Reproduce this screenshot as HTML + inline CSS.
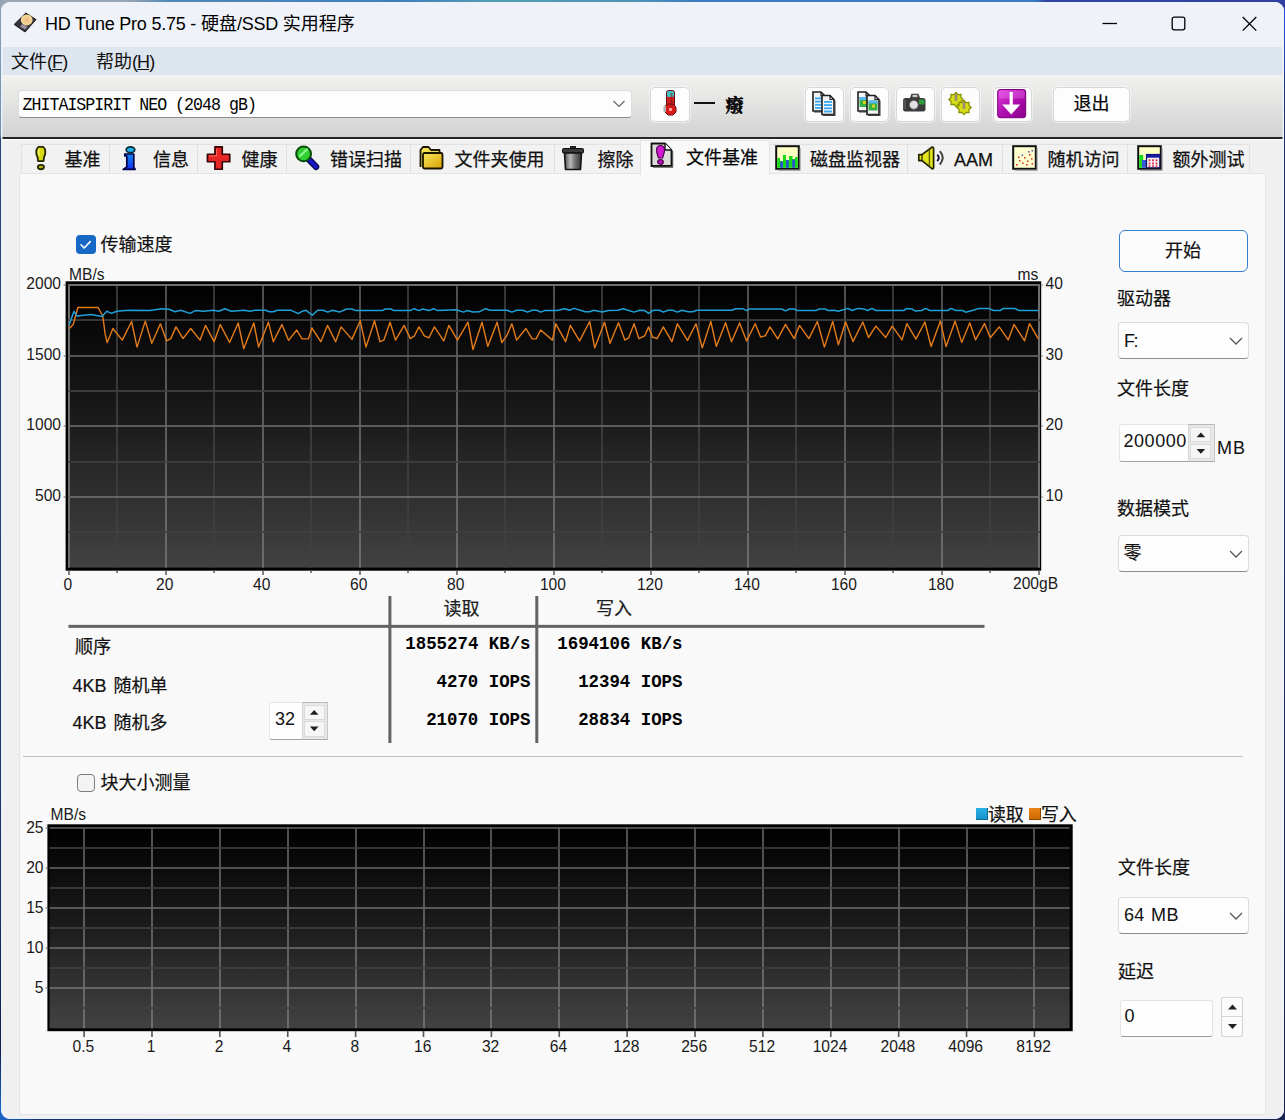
<!DOCTYPE html>
<html lang="zh-CN">
<head>
<meta charset="utf-8">
<title>HD Tune Pro 5.75 - 硬盘/SSD 实用程序</title>
<style>
*{box-sizing:border-box;margin:0;padding:0}
html,body{width:1285px;height:1120px;overflow:hidden}
body{position:relative;background:#1b2450;font-family:"Liberation Sans","Noto Sans CJK SC",sans-serif;color:#000}
.a{position:absolute;white-space:nowrap}
.t18{font-size:18px;line-height:22px;-webkit-text-stroke:0.2px #111}
.ax{font-size:15.6px;line-height:18px;color:#1a1a1a}
.axr{text-align:right}
.axc{text-align:center}

.tabt{position:absolute;top:148.8px;font-size:18px;line-height:22px;white-space:nowrap;color:#111;-webkit-text-stroke:0.25px #111}
.tbtn{position:absolute;top:87px;height:35px;width:39px;background:#fdfdfd;border:1px solid #d6d6d6;border-radius:5px;box-shadow:0 0 0 1px rgba(255,255,255,.5)}
.combo{position:absolute;background:#fdfdfd;border:1px solid #dcdcdc;border-bottom-color:#8c8c8c;border-radius:4px}
.mono{font-family:"Liberation Mono","Noto Sans CJK SC",monospace}
.val{position:absolute;font-family:"Liberation Mono","Noto Sans CJK SC",monospace;font-weight:bold;font-size:17.4px;line-height:20px;white-space:pre;text-align:right;color:#000;transform:scaleY(1.1);transform-origin:50% 80%}
svg{position:absolute;overflow:visible}
</style>
</head>
<body>
<div class="a" style="left:0;top:0;width:1285px;height:14px;background:linear-gradient(90deg,#9aa6b4 0,#97a4b3 130px,#4f88b8 170px,#3f7fba 400px,#52a0b4 500px,#4a93b6 640px,#3a7cc0 700px,#3a7cc0 1035px,#3346a8 1045px,#2f40a0 1285px)"></div>
<div class="a" style="left:0;top:10px;width:6px;height:1110px;background:linear-gradient(180deg,#8c9db4 0,#6f8fa8 125px,#2c4272 130px,#2a4070 500px,#1f2c5c 900px,#171d48 1040px,#1a64c8 1100px)"></div>
<div class="a" style="left:1279px;top:10px;width:6px;height:1110px;background:linear-gradient(180deg,#2250d8 0,#1f2e78 110px,#1f2e78 500px,#161c48 1110px)"></div>
<div class="a" style="left:0;top:1110px;width:1285px;height:10px;background:linear-gradient(90deg,#1a64c8 0,#18306c 40px,#1b2450 200px,#1b2450 1285px)"></div>
<div class="a" style="left:1px;top:1.6px;width:1283px;height:1117.4px;border-radius:9px;background:#f0f0f0;overflow:hidden">
<div class="a" style="left:0;top:0;width:1283px;height:45.4px;background:#eff3f9"></div>
<div class="a" style="left:0;top:45.4px;width:1283px;height:28px;background:#dde5ee"></div>
<div class="a" style="left:0;top:73.4px;width:1283px;height:62px;background:linear-gradient(180deg,#f1f1f0 0,#d2d2d2 62px)"></div>
<div class="a" style="left:0;top:135.2px;width:1283px;height:2px;background:#262626"></div>
<div class="a" style="left:0;top:137.2px;width:1283px;height:3px;background:linear-gradient(180deg,#fbfbfb,#f0f0f0)"></div>
<div class="a" style="left:0;top:0;width:1283px;height:1117.4px;border-radius:9px;box-shadow:inset 1.5px 0 0 #e6f3fd, inset -1.5px 0 0 #eef4fb, inset 0 -2px 0 #e9f1fa"></div>
</div>
<svg style="left:12px;top:11px" width="26" height="24" viewBox="0 0 26 24"><defs><radialGradient id="pl" cx=".5" cy=".5" r=".5"><stop offset="0" stop-color="#e6ad84"/><stop offset=".45" stop-color="#f4cf8e"/><stop offset="1" stop-color="#f1d592"/></radialGradient><linearGradient id="hb" x1="0" y1="0" x2="1" y2="1"><stop offset="0" stop-color="#2a2a26"/><stop offset=".6" stop-color="#3c3648"/><stop offset="1" stop-color="#20201c"/></linearGradient></defs><path d="M13.8 2 L24 8.6 L13 21 L2.2 13.4 Z" fill="url(#hb)" stroke="#1c1c1a" stroke-width="1" stroke-linejoin="round"/><path d="M8 15.5 L13 18.6 L15.5 15.8 L10.5 13 Z" fill="#b8a8c0" opacity=".8"/><ellipse cx="14.7" cy="8.9" rx="5.9" ry="5.5" fill="url(#pl)"/></svg>
<div class="a" style="left:45px;top:13px;font-size:18px;line-height:22px;color:#000"><span style="letter-spacing:-0.22px">HD Tune Pro 5.75 - </span>硬盘<span style="letter-spacing:-0.22px">/SSD </span>实用程序</div>
<svg style="left:1100px;top:14px" width="160" height="20" viewBox="0 0 160 20" fill="none" stroke="#000" stroke-width="1.3"><path d="M2.5 9.5 H17"/><rect x="72.2" y="3.2" width="12.6" height="12.6" rx="2"/><path d="M142.7 3 L156.3 16.6 M156.3 3 L142.7 16.6"/></svg>
<div class="a" style="left:11px;top:50.5px;font-size:18px;line-height:22px;color:#111">文件<span style="letter-spacing:-0.9px">(<u>F</u>)</span></div>
<div class="a" style="left:96px;top:50.5px;font-size:18px;line-height:22px;color:#111">帮助<span style="letter-spacing:-0.9px">(<u>H</u>)</span></div>
<div class="combo" style="left:18px;top:90px;width:614px;height:28px"></div>
<div class="a mono" style="left:22.5px;top:95.6px;font-size:16.6px;line-height:20px;letter-spacing:-0.98px;color:#000;transform:scaleY(1.09);transform-origin:0 80%">ZHITAISPIRIT NEO (2048 gB)</div>
<svg style="left:612px;top:100px" width="14" height="8" viewBox="0 0 14 8" fill="none" stroke="#666" stroke-width="1.2"><path d="M1.5 1 L7 6.5 L12.5 1"/></svg>
<div class="tbtn" style="left:649.5px;top:86.5px;height:35.5px;width:40px"></div>
<svg style="left:662px;top:89px" width="16" height="28" viewBox="0 0 16 28"><rect x="4.5" y="1.5" width="8" height="20" rx="2" fill="#d42222" stroke="#601010" stroke-width="1"/><rect x="5" y="2" width="7" height="6" rx="1.5" fill="#3fc4c4"/><path d="M3 17 L6 15 H11 L14 18 V23 L11 26 H6 L3 23 Z" fill="#d81c1c" stroke="#701010" stroke-width="1"/><rect x="1.5" y="17" width="2.5" height="6" fill="#b0b0b0"/><rect x="7" y="19" width="3" height="3" fill="#ff9a9a"/><rect x="8.5" y="4" width="2" height="14" fill="#7a1414" opacity=".55"/></svg>
<div class="a" style="left:694px;top:102.2px;width:21px;height:1.7px;background:#111"></div>
<div class="a" style="left:725.5px;top:92.5px;font-size:18px;line-height:22px;font-weight:bold;color:#000;font-family:'Noto Serif CJK SC','Noto Sans CJK SC',serif;-webkit-text-stroke:0.5px #000">癈</div>
<div class="tbtn" style="left:804.5px"></div>
<div class="tbtn" style="left:850px"></div>
<div class="tbtn" style="left:895.5px"></div>
<div class="tbtn" style="left:940.5px"></div>
<div class="tbtn" style="left:992.5px"></div>
<div class="tbtn" style="left:1053px;width:77px"></div>
<div class="a t18" style="left:1072px;top:93px;width:39px;text-align:center;color:#000">退出</div>
<svg style="left:811.5px;top:91px" width="26" height="26" viewBox="0 0 26 26"><path d="M1 1 H9 L13 5 V20 H1 Z" fill="#f4f4f6" stroke="#202020" stroke-width="1.6" stroke-linejoin="miter"/><path d="M9 1 V5 H13" fill="none" stroke="#202020" stroke-width="1.2"/><rect x="3" y="6.5" width="8" height="1.8" fill="#35a8f0"/><rect x="3" y="9.7" width="8" height="1.8" fill="#35a8f0"/><rect x="3" y="12.9" width="8" height="1.8" fill="#35a8f0"/><rect x="3" y="16.1" width="8" height="1.8" fill="#35a8f0"/><path d="M13.8 6 V20.8 H2" fill="none" stroke="#404040" stroke-width="1.4"/><path d="M10 4.5 H18 L22 8.5 V23.5 H10 Z" fill="#f4f4f6" stroke="#202020" stroke-width="1.6" stroke-linejoin="miter"/><path d="M18 4.5 V8.5 H22" fill="none" stroke="#202020" stroke-width="1.2"/><rect x="12" y="10.0" width="8" height="1.8" fill="#35a8f0"/><rect x="12" y="13.2" width="8" height="1.8" fill="#35a8f0"/><rect x="12" y="16.4" width="8" height="1.8" fill="#35a8f0"/><rect x="12" y="19.6" width="8" height="1.8" fill="#35a8f0"/><path d="M22.8 9.5 V24.3 H11" fill="none" stroke="#404040" stroke-width="1.4"/></svg>
<svg style="left:857px;top:91px" width="26" height="26" viewBox="0 0 26 26"><path d="M1 1 H9 L13 5 V20 H1 Z" fill="#f4f4f6" stroke="#202020" stroke-width="1.6" stroke-linejoin="miter"/><path d="M9 1 V5 H13" fill="none" stroke="#202020" stroke-width="1.2"/><rect x="2.5" y="6" width="9" height="10" fill="#38b048"/><rect x="2.5" y="6" width="9" height="3" fill="#58b8f0"/><rect x="6" y="10" width="3" height="3" fill="#d8d020"/><path d="M13.8 6 V20.8 H2" fill="none" stroke="#404040" stroke-width="1.4"/><path d="M10 4.5 H18 L22 8.5 V23.5 H10 Z" fill="#f4f4f6" stroke="#202020" stroke-width="1.6" stroke-linejoin="miter"/><path d="M18 4.5 V8.5 H22" fill="none" stroke="#202020" stroke-width="1.2"/><rect x="11.5" y="9.5" width="9" height="10" fill="#38b048"/><rect x="11.5" y="9.5" width="9" height="3" fill="#58b8f0"/><rect x="15" y="13.5" width="3" height="3" fill="#d8d020"/><path d="M22.8 9.5 V24.3 H11" fill="none" stroke="#404040" stroke-width="1.4"/></svg>
<svg style="left:901.5px;top:92px" width="26" height="22" viewBox="0 0 26 22"><path d="M8 6 L9.5 1.8 H16.5 L18 6 Z" fill="#3a3a3a"/><rect x="10.5" y="2.8" width="5" height="2.4" fill="#c8c8c8"/><rect x="1" y="6" width="22.5" height="13.5" rx="2.5" fill="#3a3a3a"/><rect x="1" y="8" width="3" height="9" fill="#555"/><rect x="17" y="7.5" width="5.5" height="5" rx="1" fill="#2e9a3a"/><circle cx="11.8" cy="12.8" r="4.4" fill="#e2e0e6"/><circle cx="11.8" cy="12.8" r="4.4" fill="none" stroke="#666" stroke-width=".8"/></svg>
<svg style="left:946px;top:90px" width="30" height="28" viewBox="0 0 30 28"><polygon points="17.2,9.5 14.9,11.5 15.1,14.6 12.0,14.4 10.0,16.7 8.0,14.4 4.9,14.6 5.1,11.5 2.8,9.5 5.1,7.5 4.9,4.4 8.0,4.6 10.0,2.3 12.0,4.6 15.1,4.4 14.9,7.5" fill="#d6dc18" stroke="#8a9000" stroke-width="1.2" stroke-linejoin="round"/><rect x="8.7" y="4.1" width="2.6" height="6.8" fill="#9a8a70"/><polygon points="25.2,17.5 22.9,19.5 23.1,22.6 20.0,22.4 18.0,24.7 16.0,22.4 12.9,22.6 13.1,19.5 10.8,17.5 13.1,15.5 12.9,12.4 16.0,12.6 18.0,10.3 20.0,12.6 23.1,12.4 22.9,15.5" fill="#d6dc18" stroke="#8a9000" stroke-width="1.2" stroke-linejoin="round"/><rect x="16.7" y="12.1" width="2.6" height="6.8" fill="#9a8a70"/></svg>
<svg style="left:997px;top:89px" width="30" height="30" viewBox="0 0 30 30"><defs><linearGradient id="mg" x1="0" y1="0" x2="1" y2="1"><stop offset="0" stop-color="#e040e0"/><stop offset=".5" stop-color="#b010b0"/><stop offset="1" stop-color="#8a008a"/></linearGradient></defs><rect x=".7" y=".5" width="28" height="28.2" rx="2.5" fill="url(#mg)" stroke="#7a007a" stroke-width="1"/><rect x="1.8" y="1.6" width="25.8" height="8" rx="2" fill="#f080f0" opacity=".35"/><path d="M14.2 3 V23" stroke="#fff" stroke-width="3.2"/><path d="M5.2 15.5 H23.2 L14.2 25.5 Z" fill="#fff"/></svg>
<div class="a" style="left:21px;top:143.5px;width:1229px;height:30.5px;background:#f2f2f2;border:1px solid #e2e2e2"></div>
<div class="tabt" style="left:64.5px">基准</div>
<div class="a" style="left:108.5px;top:145px;width:1px;height:28px;background:#e0e0e0"></div>
<div class="tabt" style="left:153px">信息</div>
<div class="a" style="left:196.5px;top:145px;width:1px;height:28px;background:#e0e0e0"></div>
<div class="tabt" style="left:241.5px">健康</div>
<div class="a" style="left:285.5px;top:145px;width:1px;height:28px;background:#e0e0e0"></div>
<div class="tabt" style="left:330px">错误扫描</div>
<div class="a" style="left:409.5px;top:145px;width:1px;height:28px;background:#e0e0e0"></div>
<div class="tabt" style="left:454.5px">文件夹使用</div>
<div class="a" style="left:553.5px;top:145px;width:1px;height:28px;background:#e0e0e0"></div>
<div class="tabt" style="left:597.5px">擦除</div>
<div class="a" style="left:768.5px;top:145px;width:1px;height:28px;background:#e0e0e0"></div>
<div class="tabt" style="left:810px">磁盘监视器</div>
<div class="a" style="left:907.0px;top:145px;width:1px;height:28px;background:#e0e0e0"></div>
<div class="tabt" style="left:954px">AAM</div>
<div class="a" style="left:1001.5px;top:145px;width:1px;height:28px;background:#e0e0e0"></div>
<div class="tabt" style="left:1047.5px">随机访问</div>
<div class="a" style="left:1127.0px;top:145px;width:1px;height:28px;background:#e0e0e0"></div>
<div class="tabt" style="left:1172.5px">额外测试</div>
<div class="a" style="left:19px;top:173px;width:1247px;height:942px;background:#f9f9f9;border:1px solid #e5e5e5"></div>
<div class="a" style="left:640px;top:140px;width:130px;height:35px;background:#f9f9f9;border:1px solid #e2e2e2;border-bottom:none"></div>
<div class="tabt" style="left:686px;top:146.5px;color:#000">文件基准</div>
<svg style="left:34px;top:145px" width="14" height="27" viewBox="0 0 14 27"><path d="M4.4 1.9 H9.2 Q11.4 3.6 11.4 7 Q11.4 10 10.2 11.6 L9.5 16.1 H4.1 L3.4 11.6 Q2.2 10 2.2 7 Q2.2 3.6 4.4 1.9 Z" fill="#d6d810" stroke="#262600" stroke-width="1.8" stroke-linejoin="round"/><path d="M5 4 Q4.2 7 5.2 11" stroke="#f0f060" stroke-width="1.6" fill="none"/><ellipse cx="6.9" cy="22.05" rx="3.1" ry="2.2" fill="#b8bc10" stroke="#262600" stroke-width="1.8"/></svg>
<svg style="left:122px;top:145px" width="16" height="27" viewBox="0 0 16 27"><defs><linearGradient id="ig" x1="0" y1="0" x2="0" y2="1"><stop offset="0" stop-color="#1488f4"/><stop offset="1" stop-color="#1030f0"/></linearGradient></defs><ellipse cx="8.45" cy="4.7" rx="4.3" ry="2.9" fill="#20b0f4" stroke="#062a30" stroke-width="1.7"/><path d="M2.8 9 H11.8 V22.2 L13.2 24.4 H1.2 L4.8 22 V11 H2.8 Z" fill="url(#ig)" stroke="#000048" stroke-width="1.7" stroke-linejoin="round"/></svg>
<svg style="left:206px;top:145px" width="26" height="27" viewBox="0 0 26 27"><path d="M8.95 1.85 H16.25 V9.25 H23.75 V16.75 H16.25 V24.25 H8.95 V16.75 H1.45 V9.25 H8.95 Z" fill="#e62626" stroke="#340404" stroke-width="1.7" stroke-linejoin="round"/><path d="M10.6 3.6 V10.8 H3.2" stroke="#ff6a5a" stroke-width="1.2" fill="none" opacity=".8"/></svg>
<svg style="left:294px;top:144px" width="28" height="28" viewBox="0 0 28 28"><path d="M14.5 15 L22 22.8" stroke="#080850" stroke-width="6.5" stroke-linecap="round"/><path d="M14.5 15 L22 22.8" stroke="#1818c8" stroke-width="3.8" stroke-linecap="round"/><circle cx="9.6" cy="9.9" r="7.4" fill="#30d030" stroke="#0a4a0a" stroke-width="2"/><path d="M6 12 L13 5.5" stroke="#90f890" stroke-width="2.2" stroke-linecap="round"/></svg>
<svg style="left:419px;top:145px" width="26" height="26" viewBox="0 0 26 26"><defs><linearGradient id="fg" x1="0" y1="0" x2="1" y2="1"><stop offset="0" stop-color="#f8e860"/><stop offset="1" stop-color="#d8a000"/></linearGradient></defs><path d="M1.5 22 V5 L4 2 H9.5 L12 5 H20.5 V8" fill="#f0e050" stroke="#181400" stroke-width="1.8" stroke-linejoin="round"/><rect x="4" y="8" width="19.5" height="15.5" rx="1.5" fill="url(#fg)" stroke="#181400" stroke-width="1.8"/></svg>
<svg style="left:561px;top:145px" width="24" height="26" viewBox="0 0 24 26"><defs><linearGradient id="tg" x1="0" y1="0" x2="1" y2="0"><stop offset="0" stop-color="#505050"/><stop offset=".35" stop-color="#b8b8b8"/><stop offset=".6" stop-color="#787878"/><stop offset="1" stop-color="#303030"/></linearGradient></defs><rect x="9" y="1" width="6" height="3" fill="#222"/><rect x="1.5" y="3.5" width="21" height="4.5" rx="1" fill="#3a3a3a" stroke="#111" stroke-width="1"/><path d="M3.5 8 H20.5 L19.5 24.5 H4.5 Z" fill="url(#tg)" stroke="#111" stroke-width="1.6" stroke-linejoin="round"/></svg>
<svg style="left:650px;top:142px" width="24" height="26" viewBox="0 0 24 26"><path d="M1.5 1.5 H15 L21.5 8 V24 H1.5 Z" fill="#dcdcd8" stroke="#101010" stroke-width="1.8" stroke-linejoin="miter"/><path d="M15 1.5 V8 H21.5" fill="#fff" stroke="#101010" stroke-width="1.4"/><path d="M22.6 9 V25.2 H3" stroke="#555" stroke-width="1.2" fill="none"/><path d="M10.5 3.5 C14 3.5 15 6.5 14.3 10 L12.6 16 H8.4 L6.7 10 C6 6.5 7 3.5 10.5 3.5 Z" fill="#d418d4" stroke="#500050" stroke-width="1.2"/><ellipse cx="10.5" cy="20" rx="2.8" ry="2.3" fill="#c010c0" stroke="#500050" stroke-width="1.2"/></svg>
<svg style="left:775px;top:145px" width="26" height="26" viewBox="0 0 26 26"><rect x="1.2" y="1.2" width="22.6" height="22.6" fill="#ffffc4" stroke="#101010" stroke-width="2"/><path d="M2.2 22.8 V13 H5 V16 H8 V10 H11 V15 H14 V11 H17.5 V14 H20 V12 H22.8 V22.8 Z" fill="#18d818"/><rect x="5.2" y="16.5" width="2.8" height="6.3" fill="#2858d0"/><rect x="11" y="15" width="2.8" height="7.8" fill="#2858d0"/><rect x="17.2" y="14.5" width="2.8" height="8.3" fill="#2858d0"/><path d="M24.8 3 V24.8 H3" stroke="#666" stroke-width="1.2" fill="none"/></svg>
<svg style="left:917px;top:145px" width="30" height="27" viewBox="0 0 30 27"><path d="M1.8 9.6 H5 L15.2 2 Q16.6 2 16.6 3.4 V22.4 Q16.6 23.8 15.2 23.8 L5 15.6 H1.8 Z" fill="#e2e41c" stroke="#222200" stroke-width="1.7" stroke-linejoin="round"/><path d="M12.4 4.5 V21.5" stroke="#606000" stroke-width="1.4"/><path d="M5 9.8 V15.4" stroke="#222200" stroke-width="1.2"/><path d="M20.2 9.6 Q23.4 12.6 20.2 16.2" stroke="#141448" stroke-width="1.9" fill="none"/><path d="M22.8 6.2 Q28.6 12.6 22.8 19.6" stroke="#3a3a3a" stroke-width="1.9" fill="none"/></svg>
<svg style="left:1012px;top:145px" width="26" height="26" viewBox="0 0 26 26"><rect x="1.2" y="1.2" width="22.6" height="22.6" fill="#ffffd0" stroke="#101010" stroke-width="2"/><path d="M24.8 3 V24.8 H3" stroke="#666" stroke-width="1.2" fill="none"/><g fill="#e03030"><rect x="4" y="19" width="1.6" height="1.6"/><rect x="7" y="15" width="1.6" height="1.6"/><rect x="10" y="17.5" width="1.6" height="1.6"/><rect x="12" y="12" width="1.6" height="1.6"/><rect x="15" y="15.5" width="1.6" height="1.6"/><rect x="17" y="9" width="1.6" height="1.6"/><rect x="19" y="13" width="1.6" height="1.6"/><rect x="6" y="11.5" width="1.6" height="1.6"/><rect x="14" y="19" width="1.6" height="1.6"/><rect x="19.5" y="18" width="1.6" height="1.6"/></g><g fill="#6060c0"><rect x="16" y="6" width="1.6" height="1.6"/><rect x="19.5" y="5" width="1.6" height="1.6"/><rect x="9.5" y="9.5" width="1.6" height="1.6"/></g></svg>
<svg style="left:1137px;top:145px" width="26" height="26" viewBox="0 0 26 26"><rect x="1.2" y="1.2" width="22.6" height="22.6" fill="#ffffc4" stroke="#101010" stroke-width="2"/><path d="M24.8 3 V24.8 H3" stroke="#666" stroke-width="1.2" fill="none"/><rect x="2.2" y="10" width="4" height="12.8" fill="#18d818"/><rect x="5" y="15" width="4" height="7.8" fill="#3858d8"/><rect x="9.5" y="9.5" width="13.3" height="13.3" fill="#f4f4f4" stroke="#101060" stroke-width="1.2"/><rect x="9.5" y="9.5" width="13.3" height="3.2" fill="#1818a0"/><g fill="#e04060"><rect x="11.5" y="14.3" width="2" height="2"/><rect x="15" y="14.3" width="2" height="2"/><rect x="18.5" y="14.3" width="2" height="2"/><rect x="11.5" y="17.5" width="2" height="2"/><rect x="15" y="17.5" width="2" height="2"/><rect x="18.5" y="17.5" width="2" height="2"/><rect x="11.5" y="20.3" width="2" height="1.6"/><rect x="15" y="20.3" width="2" height="1.6"/><rect x="18.5" y="20.3" width="2" height="1.6"/></g></svg>
<div class="a" style="left:76px;top:234.7px;width:19.5px;height:19.5px;border-radius:4px;background:#1668c4"></div>
<svg style="left:76px;top:235px" width="19" height="19" viewBox="0 0 19 19" fill="none" stroke="#fff" stroke-width="1.6" stroke-linecap="round" stroke-linejoin="round"><path d="M5 9.8 L8.2 13 L14.2 6.6"/></svg>
<div class="a t18" style="left:100.5px;top:233.5px;color:#111">传输速度</div>
<svg style="left:0;top:0" width="1285" height="1120" viewBox="0 0 1285 1120"><defs><linearGradient id="cg" x1="0" y1="0" x2="0" y2="1"><stop offset="0" stop-color="#000"/><stop offset=".5" stop-color="#1c1c1c"/><stop offset=".62" stop-color="#262626"/><stop offset="1" stop-color="#424242"/></linearGradient><linearGradient id="mj" x1="0" y1="0" x2="0" y2="1"><stop offset="0" stop-color="#5a5a5a"/><stop offset="1" stop-color="#747474"/></linearGradient></defs><rect x="65.6" y="281.3" width="975.6" height="289.40000000000003" fill="#000"/><rect x="68.2" y="284" width="971.8" height="283.6" fill="url(#cg)"/><rect x="68.0" y="284" width="2" height="283.6" fill="#6e6e6e"/><rect x="68.25" y="570.6" width="1.5" height="4.4" fill="#5a5a5a"/><rect x="116.15" y="284" width="1.7" height="283.6" fill="#404040"/><rect x="116.25" y="570.6" width="1.5" height="2.4" fill="#5a5a5a"/><rect x="165.15" y="284" width="1.7" height="283.6" fill="url(#mj)"/><rect x="165.25" y="570.6" width="1.5" height="4.4" fill="#5a5a5a"/><rect x="213.15" y="284" width="1.7" height="283.6" fill="#404040"/><rect x="213.25" y="570.6" width="1.5" height="2.4" fill="#5a5a5a"/><rect x="262.15" y="284" width="1.7" height="283.6" fill="url(#mj)"/><rect x="262.25" y="570.6" width="1.5" height="4.4" fill="#5a5a5a"/><rect x="310.15" y="284" width="1.7" height="283.6" fill="#404040"/><rect x="310.25" y="570.6" width="1.5" height="2.4" fill="#5a5a5a"/><rect x="359.15" y="284" width="1.7" height="283.6" fill="url(#mj)"/><rect x="359.25" y="570.6" width="1.5" height="4.4" fill="#5a5a5a"/><rect x="407.15" y="284" width="1.7" height="283.6" fill="#404040"/><rect x="407.25" y="570.6" width="1.5" height="2.4" fill="#5a5a5a"/><rect x="456.15" y="284" width="1.7" height="283.6" fill="url(#mj)"/><rect x="456.25" y="570.6" width="1.5" height="4.4" fill="#5a5a5a"/><rect x="504.15" y="284" width="1.7" height="283.6" fill="#404040"/><rect x="504.25" y="570.6" width="1.5" height="2.4" fill="#5a5a5a"/><rect x="553.15" y="284" width="1.7" height="283.6" fill="url(#mj)"/><rect x="553.25" y="570.6" width="1.5" height="4.4" fill="#5a5a5a"/><rect x="601.15" y="284" width="1.7" height="283.6" fill="#404040"/><rect x="601.25" y="570.6" width="1.5" height="2.4" fill="#5a5a5a"/><rect x="650.15" y="284" width="1.7" height="283.6" fill="url(#mj)"/><rect x="650.25" y="570.6" width="1.5" height="4.4" fill="#5a5a5a"/><rect x="698.15" y="284" width="1.7" height="283.6" fill="#404040"/><rect x="698.25" y="570.6" width="1.5" height="2.4" fill="#5a5a5a"/><rect x="747.15" y="284" width="1.7" height="283.6" fill="url(#mj)"/><rect x="747.25" y="570.6" width="1.5" height="4.4" fill="#5a5a5a"/><rect x="795.15" y="284" width="1.7" height="283.6" fill="#404040"/><rect x="795.25" y="570.6" width="1.5" height="2.4" fill="#5a5a5a"/><rect x="844.15" y="284" width="1.7" height="283.6" fill="url(#mj)"/><rect x="844.25" y="570.6" width="1.5" height="4.4" fill="#5a5a5a"/><rect x="892.15" y="284" width="1.7" height="283.6" fill="#404040"/><rect x="892.25" y="570.6" width="1.5" height="2.4" fill="#5a5a5a"/><rect x="941.15" y="284" width="1.7" height="283.6" fill="url(#mj)"/><rect x="941.25" y="570.6" width="1.5" height="4.4" fill="#5a5a5a"/><rect x="989.15" y="284" width="1.7" height="283.6" fill="#404040"/><rect x="989.25" y="570.6" width="1.5" height="2.4" fill="#5a5a5a"/><rect x="1038.0" y="284" width="2" height="283.6" fill="#6e6e6e"/><rect x="1038.25" y="570.6" width="1.5" height="4.4" fill="#5a5a5a"/><rect x="68.2" y="284.0" width="971.8" height="2" fill="#6e6e6e"/><rect x="63.6" y="284.40" width="2" height="1.2" fill="#777"/><rect x="1041.2" y="284.40" width="2" height="1.2" fill="#999"/><rect x="68.2" y="319.15" width="971.8" height="1.7" fill="#404040"/><rect x="68.2" y="355.15" width="971.8" height="1.7" fill="#606060"/><rect x="63.6" y="355.40" width="2" height="1.2" fill="#777"/><rect x="1041.2" y="355.40" width="2" height="1.2" fill="#999"/><rect x="68.2" y="390.15" width="971.8" height="1.7" fill="#404040"/><rect x="68.2" y="425.15" width="971.8" height="1.7" fill="#676767"/><rect x="63.6" y="425.40" width="2" height="1.2" fill="#777"/><rect x="1041.2" y="425.40" width="2" height="1.2" fill="#999"/><rect x="68.2" y="461.15" width="971.8" height="1.7" fill="#404040"/><rect x="68.2" y="496.15" width="971.8" height="1.7" fill="#6d6d6d"/><rect x="63.6" y="496.40" width="2" height="1.2" fill="#777"/><rect x="1041.2" y="496.40" width="2" height="1.2" fill="#999"/><rect x="68.2" y="531.15" width="971.8" height="1.7" fill="#404040"/><polyline fill="none" stroke="#e47c1a" stroke-width="1.4" stroke-linejoin="round" points="69.3,328.5 73.2,324.6 75.6,316.0 77.9,307.5 98.1,307.5 102.8,316.0 105.1,333.9 107.2,342.5 112.9,328.5 122.3,340.1 131.6,321.5 137.0,347.1 145.3,321.1 151.8,343.2 160.4,323.8 166.6,340.9 170.8,338.6 176.0,326.9 183.0,338.6 190.7,328.5 200.1,340.1 205.5,325.4 214.1,341.7 220.3,324.6 229.6,342.5 238.2,323.0 243.7,348.7 253.8,323.0 258.6,347.1 268.4,322.2 273.3,341.7 281.9,324.6 288.6,340.4 296.7,330.0 302.1,338.9 308.4,338.9 311.9,328.0 320.8,341.7 327.5,325.4 335.6,341.7 341.1,326.9 351.9,339.4 360.2,320.7 366.0,347.1 374.5,320.7 380.0,341.7 383.9,340.1 390.1,322.2 395.5,340.1 404.1,325.4 410.3,338.6 414.2,336.2 418.9,326.9 424.3,335.8 429.0,337.8 434.4,326.9 443.8,340.9 448.9,325.4 457.5,340.1 468.0,322.2 473.0,349.5 482.0,322.2 487.8,346.4 497.1,322.2 501.8,342.5 506.5,336.2 511.9,323.8 516.6,340.1 525.9,328.5 532.2,338.9 536.1,338.9 540.7,330.0 552.4,340.1 555.8,323.8 565.6,341.7 570.3,325.4 579.6,340.9 589.7,321.5 594.7,347.9 604.5,322.2 610.0,343.2 618.5,322.7 624.8,340.1 628.7,337.8 634.1,323.8 638.8,338.6 644.7,335.8 648.6,326.9 652.5,337.0 657.1,338.6 663.3,326.9 671.9,341.7 677.4,323.8 687.5,340.4 696.0,323.8 702.3,347.9 710.8,321.5 716.3,346.4 725.6,322.7 731.5,341.7 739.6,323.0 746.6,340.9 755.2,323.8 760.6,337.0 765.3,335.8 770.0,326.9 777.7,338.9 785.5,324.3 794.1,338.6 799.5,325.4 808.9,338.6 817.4,321.5 824.4,347.1 832.7,321.5 838.4,344.8 845.6,322.0 853.0,341.6 862.8,322.0 868.5,337.5 875.9,326.1 885.7,337.5 892.2,326.1 902.0,339.9 906.9,323.6 915.9,339.1 924.9,322.0 931.1,346.5 940.4,321.1 946.1,346.5 955.1,321.1 961.7,342.4 969.8,322.8 975.5,339.9 984.5,323.6 990.3,337.8 999.2,326.9 1008.2,339.9 1014.0,324.4 1024.6,340.8 1029.5,323.6 1038.5,339.1"/><polyline fill="none" stroke="#20a0d8" stroke-width="1.5" stroke-linejoin="round" points="69.3,324.6 74.0,311.3 77.1,316.0 91.1,314.5 102.0,316.5 106.7,311.3 111.4,313.4 116.8,311.3 128.5,310.3 150.3,310.6 161.2,308.7 168.9,309.3 175.2,311.8 180.6,310.3 190.0,313.4 195.4,310.6 203.2,311.3 213.3,310.3 218.8,311.3 225.0,308.7 231.2,311.3 243.7,310.3 249.9,311.3 254.7,310.3 265.6,310.3 269.5,311.8 273.3,311.8 277.2,310.3 291.2,310.3 298.2,313.7 302.1,311.3 306.0,310.3 312.3,315.2 317.7,310.3 323.2,310.3 327.8,312.1 332.5,310.3 339.5,312.1 346.5,309.0 351.9,309.0 355.8,310.6 382.3,310.6 385.4,309.0 390.9,309.0 394.0,310.6 410.3,310.6 414.2,308.7 418.9,310.6 422.8,309.0 429.0,310.6 433.7,308.7 437.5,310.6 455.9,309.8 463.7,312.1 466.8,310.6 473.0,312.1 479.2,311.8 485.5,308.7 490.1,310.3 507.3,310.3 511.9,312.1 516.6,310.3 522.8,310.3 527.5,312.1 532.2,310.3 536.8,310.3 540.7,312.1 544.6,310.6 557.1,310.6 564.8,308.7 569.5,310.3 574.2,308.4 585.1,311.8 589.7,311.8 593.6,310.3 602.2,312.1 608.4,310.6 617.8,310.3 623.2,308.7 634.1,312.1 639.6,310.3 644.7,310.6 648.6,313.4 653.2,310.3 659.5,310.3 663.3,312.1 668.0,310.3 672.7,310.3 677.4,312.1 682.0,310.3 688.2,311.8 692.9,311.8 696.8,310.3 731.8,310.3 735.7,308.7 742.7,308.7 746.6,310.6 748.9,309.0 781.6,309.0 785.5,310.9 789.4,309.0 794.1,309.0 797.2,310.6 815.9,310.6 819.0,309.0 825.2,309.0 828.3,310.6 834.6,310.3 838.3,311.3 848.1,308.4 852.2,310.5 857.9,308.4 863.6,308.9 867.7,310.5 871.8,308.4 875.9,310.5 903.6,310.5 906.9,308.4 911.8,308.9 915.1,310.9 921.6,310.5 925.7,308.4 929.8,310.5 947.8,310.5 951.0,308.4 955.9,310.5 962.5,310.5 965.7,312.2 973.9,310.0 978.8,308.4 988.6,308.4 993.5,310.5 1000.1,310.5 1003.3,308.4 1014.8,308.4 1018.9,310.5 1038.5,310.5"/></svg>
<div class="a ax" style="left:69px;top:265.5px">MB/s</div>
<div class="a ax" style="left:1017.5px;top:265.5px">ms</div>
<div class="a ax axr" style="left:10px;width:51px;top:275.0px">2000</div>
<div class="a ax axr" style="left:10px;width:51px;top:345.8px">1500</div>
<div class="a ax axr" style="left:10px;width:51px;top:416.3px">1000</div>
<div class="a ax axr" style="left:10px;width:51px;top:486.9px">500</div>
<div class="a ax" style="left:1045.5px;top:275.0px">40</div>
<div class="a ax" style="left:1045.5px;top:345.8px">30</div>
<div class="a ax" style="left:1045.5px;top:416.3px">20</div>
<div class="a ax" style="left:1045.5px;top:486.9px">10</div>
<div class="a ax axc" style="left:37.8px;width:60px;top:575.5px">0</div>
<div class="a ax axc" style="left:134.8px;width:60px;top:575.5px">20</div>
<div class="a ax axc" style="left:231.8px;width:60px;top:575.5px">40</div>
<div class="a ax axc" style="left:328.8px;width:60px;top:575.5px">60</div>
<div class="a ax axc" style="left:425.8px;width:60px;top:575.5px">80</div>
<div class="a ax axc" style="left:522.9px;width:60px;top:575.5px">100</div>
<div class="a ax axc" style="left:619.9px;width:60px;top:575.5px">120</div>
<div class="a ax axc" style="left:716.9px;width:60px;top:575.5px">140</div>
<div class="a ax axc" style="left:813.9px;width:60px;top:575.5px">160</div>
<div class="a ax axc" style="left:910.9px;width:60px;top:575.5px">180</div>
<div class="a ax" style="left:1013px;top:575px">200gB</div>
<svg style="left:0;top:0" width="1285" height="1120" viewBox="0 0 1285 1120" fill="#636363"><rect x="68.5" y="624.85" width="916" height="3"/><rect x="388.4" y="596" width="3" height="147"/><rect x="535.3" y="596" width="3" height="147"/></svg>
<div class="a t18" style="left:443.5px;top:598px;color:#222">读取</div>
<div class="a t18" style="left:596px;top:598px;color:#222">写入</div>
<div class="a t18" style="left:75px;top:636px;color:#111">顺序</div>
<div class="a t18" style="left:72.5px;top:674.5px;color:#111;word-spacing:2px">4KB 随机单</div>
<div class="a t18" style="left:72.5px;top:712px;color:#111;word-spacing:2px">4KB 随机多</div>
<div class="val" style="left:370.5px;width:160px;top:634.8px">1855274 KB/s</div>
<div class="val" style="left:370.5px;width:160px;top:673.3px">4270 IOPS</div>
<div class="val" style="left:370.5px;width:160px;top:710.8px">21070 IOPS</div>
<div class="val" style="left:522.5px;width:160px;top:634.8px">1694106 KB/s</div>
<div class="val" style="left:522.5px;width:160px;top:673.3px">12394 IOPS</div>
<div class="val" style="left:522.5px;width:160px;top:710.8px">28834 IOPS</div>
<div class="a" style="left:269px;top:701.5px;width:59px;height:38.5px;background:#fefefe;border:1px solid #e6e6e6;border-bottom:1.5px solid #a2a2a2;border-radius:3px 0 0 3px"></div>
<div class="a" style="left:301.6px;top:701.5px;width:26.399999999999977px;height:38.5px;background:#e8e8e8;border:1px solid #c6c6c6;border-left-color:#d6d6d6;border-top-color:#b8b8b8;border-bottom:1.5px solid #a8a8a8"></div>
<div class="a" style="left:303.6px;top:704.7px;width:21.19999999999999px;height:15.149999999999864px;background:#f6f6f6;border:1px solid #dadada"></div>
<div class="a" style="left:303.6px;top:721.25px;width:21.19999999999999px;height:15.350000000000023px;background:#f6f6f6;border:1px solid #dadada"></div>
<svg style="left:0;top:0" width="1285" height="1120" viewBox="0 0 1285 1120" fill="#1e1e1e"><path d="M309.90000000000003 714.675 L314.20000000000005 709.875 L318.50000000000006 714.675 Z"/><path d="M309.90000000000003 726.525 L314.20000000000005 731.3249999999999 L318.50000000000006 726.525 Z"/></svg>
<div class="a" style="left:275px;top:707.5px;font-size:18px;line-height:22px;color:#111">32</div>
<div class="a" style="left:23px;top:755.5px;width:1220px;height:1.2px;background:#c2c2c2"></div>
<div class="a" style="left:77px;top:774px;width:18px;height:18px;border-radius:4px;background:#f3f3f3;border:1.3px solid #7c7c7c"></div>
<div class="a t18" style="left:100.5px;top:772px;color:#111">块大小测量</div>
<div class="a" style="left:976px;top:808px;width:12px;height:12px;background:linear-gradient(180deg,#2ab0e4,#1490c8);box-shadow:inset -1px -1px 0 #0c6c98"></div>
<div class="a t18" style="left:988px;top:803.8px;color:#111;letter-spacing:-0.3px">读取</div>
<div class="a" style="left:1029px;top:808px;width:12px;height:12px;background:linear-gradient(180deg,#ec8418,#c86800);box-shadow:inset -1px -1px 0 #8c4800"></div>
<div class="a t18" style="left:1041px;top:803.8px;color:#111;letter-spacing:-0.3px">写入</div>
<svg style="left:0;top:0" width="1285" height="1120" viewBox="0 0 1285 1120"><rect x="47.4" y="824.3" width="1025.3" height="206.9000000000001" fill="#000"/><rect x="49.6" y="827" width="1019.9999999999999" height="201.29999999999995" fill="url(#cg)"/><rect x="83.15" y="827" width="1.7" height="201.29999999999995" fill="url(#mj)"/><rect x="83.30" y="1031" width="1.6" height="6" fill="#555"/><rect x="151.15" y="827" width="1.7" height="201.29999999999995" fill="url(#mj)"/><rect x="151.18" y="1031" width="1.6" height="6" fill="#555"/><rect x="219.15" y="827" width="1.7" height="201.29999999999995" fill="url(#mj)"/><rect x="219.06" y="1031" width="1.6" height="6" fill="#555"/><rect x="287.15" y="827" width="1.7" height="201.29999999999995" fill="url(#mj)"/><rect x="286.94" y="1031" width="1.6" height="6" fill="#555"/><rect x="355.15" y="827" width="1.7" height="201.29999999999995" fill="url(#mj)"/><rect x="354.82" y="1031" width="1.6" height="6" fill="#555"/><rect x="423.15" y="827" width="1.7" height="201.29999999999995" fill="url(#mj)"/><rect x="422.70" y="1031" width="1.6" height="6" fill="#555"/><rect x="490.15" y="827" width="1.7" height="201.29999999999995" fill="url(#mj)"/><rect x="490.58" y="1031" width="1.6" height="6" fill="#555"/><rect x="558.15" y="827" width="1.7" height="201.29999999999995" fill="url(#mj)"/><rect x="558.46" y="1031" width="1.6" height="6" fill="#555"/><rect x="626.15" y="827" width="1.7" height="201.29999999999995" fill="url(#mj)"/><rect x="626.34" y="1031" width="1.6" height="6" fill="#555"/><rect x="694.15" y="827" width="1.7" height="201.29999999999995" fill="url(#mj)"/><rect x="694.22" y="1031" width="1.6" height="6" fill="#555"/><rect x="762.15" y="827" width="1.7" height="201.29999999999995" fill="url(#mj)"/><rect x="762.10" y="1031" width="1.6" height="6" fill="#555"/><rect x="830.15" y="827" width="1.7" height="201.29999999999995" fill="url(#mj)"/><rect x="829.98" y="1031" width="1.6" height="6" fill="#555"/><rect x="898.15" y="827" width="1.7" height="201.29999999999995" fill="url(#mj)"/><rect x="897.86" y="1031" width="1.6" height="6" fill="#555"/><rect x="966.15" y="827" width="1.7" height="201.29999999999995" fill="url(#mj)"/><rect x="965.74" y="1031" width="1.6" height="6" fill="#555"/><rect x="1033.15" y="827" width="1.7" height="201.29999999999995" fill="url(#mj)"/><rect x="1033.62" y="1031" width="1.6" height="6" fill="#555"/><rect x="49.6" y="827.15" width="1019.9999999999999" height="1.7" fill="#5a5a5a"/><rect x="45.6" y="827.40" width="1.8" height="1.2" fill="#777"/><rect x="49.6" y="847.15" width="1019.9999999999999" height="1.7" fill="#404040"/><rect x="49.6" y="867.15" width="1019.9999999999999" height="1.7" fill="#5f5f5f"/><rect x="45.6" y="867.40" width="1.8" height="1.2" fill="#777"/><rect x="49.6" y="887.15" width="1019.9999999999999" height="1.7" fill="#404040"/><rect x="49.6" y="907.15" width="1019.9999999999999" height="1.7" fill="#646464"/><rect x="45.6" y="907.40" width="1.8" height="1.2" fill="#777"/><rect x="49.6" y="927.15" width="1019.9999999999999" height="1.7" fill="#404040"/><rect x="49.6" y="947.15" width="1019.9999999999999" height="1.7" fill="#696969"/><rect x="45.6" y="947.40" width="1.8" height="1.2" fill="#777"/><rect x="49.6" y="967.15" width="1019.9999999999999" height="1.7" fill="#404040"/><rect x="49.6" y="987.15" width="1019.9999999999999" height="1.7" fill="#6e6e6e"/><rect x="45.6" y="987.40" width="1.8" height="1.2" fill="#777"/><rect x="49.6" y="1007.15" width="1019.9999999999999" height="1.7" fill="#404040"/></svg>
<div class="a ax" style="left:50.5px;top:806px">MB/s</div>
<div class="a ax axr" style="left:0px;width:43.5px;top:818.8px">25</div>
<div class="a ax axr" style="left:0px;width:43.5px;top:858.8px">20</div>
<div class="a ax axr" style="left:0px;width:43.5px;top:899.0999999999999px">15</div>
<div class="a ax axr" style="left:0px;width:43.5px;top:939.0999999999999px">10</div>
<div class="a ax axr" style="left:0px;width:43.5px;top:979.3px">5</div>
<div class="a ax axc" style="left:53.3px;width:60px;top:1037.5px">0.5</div>
<div class="a ax axc" style="left:121.2px;width:60px;top:1037.5px">1</div>
<div class="a ax axc" style="left:189.1px;width:60px;top:1037.5px">2</div>
<div class="a ax axc" style="left:256.9px;width:60px;top:1037.5px">4</div>
<div class="a ax axc" style="left:324.8px;width:60px;top:1037.5px">8</div>
<div class="a ax axc" style="left:392.7px;width:60px;top:1037.5px">16</div>
<div class="a ax axc" style="left:460.6px;width:60px;top:1037.5px">32</div>
<div class="a ax axc" style="left:528.5px;width:60px;top:1037.5px">64</div>
<div class="a ax axc" style="left:596.3px;width:60px;top:1037.5px">128</div>
<div class="a ax axc" style="left:664.2px;width:60px;top:1037.5px">256</div>
<div class="a ax axc" style="left:732.1px;width:60px;top:1037.5px">512</div>
<div class="a ax axc" style="left:800.0px;width:60px;top:1037.5px">1024</div>
<div class="a ax axc" style="left:867.9px;width:60px;top:1037.5px">2048</div>
<div class="a ax axc" style="left:935.7px;width:60px;top:1037.5px">4096</div>
<div class="a ax axc" style="left:1003.6px;width:60px;top:1037.5px">8192</div>
<div class="a" style="left:1119px;top:230px;width:129px;height:42px;border:1.7px solid #3380d0;border-radius:6px;background:#fcfcfc"></div>
<div class="a t18" style="left:1165px;top:239.5px;color:#111">开始</div>
<div class="a t18" style="left:1117px;top:287.5px;color:#111">驱动器</div>
<div class="combo" style="left:1118px;top:322px;width:131px;height:36.5px"></div>
<div class="a" style="left:1124px;top:329.5px;font-size:18px;line-height:22px;color:#111;letter-spacing:-1.6px">F:</div>
<svg style="left:1229px;top:337px" width="14" height="8" viewBox="0 0 14 8" fill="none" stroke="#555" stroke-width="1.25"><path d="M1 1 L7 7 L13 1"/></svg>
<div class="a t18" style="left:1117px;top:378px;color:#111">文件长度</div>
<div class="a" style="left:1118.6px;top:424.2px;width:96.0px;height:38.19999999999999px;background:#fefefe;border:1px solid #e6e6e6;border-bottom:1.5px solid #a2a2a2;border-radius:3px 0 0 3px"></div>
<div class="a" style="left:1188.4px;top:424.2px;width:26.199999999999818px;height:38.19999999999999px;background:#e8e8e8;border:1px solid #c6c6c6;border-left-color:#d6d6d6;border-top-color:#b8b8b8;border-bottom:1.5px solid #a8a8a8"></div>
<div class="a" style="left:1190.4px;top:427.4px;width:20.999999999999773px;height:15.0px;background:#f6f6f6;border:1px solid #dadada"></div>
<div class="a" style="left:1190.4px;top:443.79999999999995px;width:20.999999999999773px;height:15.200000000000045px;background:#f6f6f6;border:1px solid #dadada"></div>
<svg style="left:0;top:0" width="1285" height="1120" viewBox="0 0 1285 1120" fill="#1e1e1e"><path d="M1196.6000000000001 437.29999999999995 L1200.9 432.5 L1205.2 437.29999999999995 Z"/><path d="M1196.6000000000001 449.0 L1200.9 453.79999999999995 L1205.2 449.0 Z"/></svg>
<div class="a" style="left:1123.5px;top:430px;font-size:18px;line-height:22px;color:#111;letter-spacing:0.55px">200000</div>
<div class="a" style="left:1217px;top:437px;font-size:18px;line-height:22px;color:#111;letter-spacing:1.1px">MB</div>
<div class="a t18" style="left:1117px;top:498px;color:#111">数据模式</div>
<div class="combo" style="left:1118px;top:535px;width:131px;height:36.5px"></div>
<div class="a t18" style="left:1123.5px;top:541.5px;color:#111">零</div>
<svg style="left:1229px;top:549.5px" width="14" height="8" viewBox="0 0 14 8" fill="none" stroke="#555" stroke-width="1.25"><path d="M1 1 L7 7 L13 1"/></svg>
<div class="a t18" style="left:1118px;top:857px;color:#111">文件长度</div>
<div class="combo" style="left:1118px;top:897px;width:131px;height:36.5px"></div>
<div class="a" style="left:1124px;top:904px;font-size:18px;line-height:22px;color:#111;letter-spacing:0.35px;word-spacing:1px">64 MB</div>
<svg style="left:1229px;top:911.5px" width="14" height="8" viewBox="0 0 14 8" fill="none" stroke="#555" stroke-width="1.25"><path d="M1 1 L7 7 L13 1"/></svg>
<div class="a t18" style="left:1118px;top:961px;color:#111">延迟</div>
<div class="a" style="left:1119.5px;top:999.5px;width:93px;height:37.5px;background:#fefefe;border:1px solid #e4e4e4;border-bottom-color:#9a9a9a;border-radius:3px"></div>
<div class="a" style="left:1124.5px;top:1005px;font-size:18px;line-height:22px;color:#111">0</div>
<div class="a" style="left:1221px;top:996.5px;width:22px;height:40px;background:#fbfbfb;border:1px solid #d4d4d4;border-radius:2px"></div>
<div class="a" style="left:1222px;top:1016px;width:20px;height:1px;background:#d4d4d4"></div>
<svg style="left:1226.5px;top:1003px" width="11" height="28" viewBox="0 0 11 28" fill="#222"><path d="M1 6.5 L5.5 1.5 L10 6.5 Z"/><path d="M1 21 L5.5 26 L10 21 Z"/></svg>
</body>
</html>
